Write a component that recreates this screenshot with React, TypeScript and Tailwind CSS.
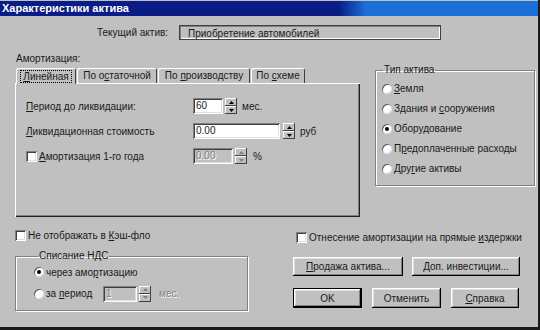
import type { ReactNode } from 'react';

const sunken = 'shadow-[inset_1px_1px_0_#808080,inset_-1px_-1px_0_#ffffff,inset_2px_2px_0_#404040,inset_-2px_-2px_0_#dfdfdf]';
const raised = 'shadow-[inset_-1px_-1px_0_#000000,inset_1px_1px_0_#ffffff,inset_-2px_-2px_0_#808080,inset_2px_2px_0_#dfdfdf]';
const raisedSmall = 'shadow-[inset_-1px_-1px_0_#404040,inset_1px_1px_0_#ffffff]';
const etched = 'border border-[#808080] shadow-[1px_1px_0_#ffffff,inset_1px_1px_0_#ffffff]';
const grey = 'text-[#808080] [text-shadow:1px_1px_0_#ffffff]';

function U({ children }: { children: ReactNode }) {
  return <span className="underline underline-offset-1">{children}</span>;
}

function Spin({ disabled }: { disabled?: boolean }) {
  const fill = disabled ? '#808080' : '#000000';
  return (
    <div className="flex flex-col w-[12px] h-[16px]">
      <div className={`flex-1 flex items-center justify-center bg-[#c0c0c0] ${raisedSmall}`}>
        <svg width="5" height="3" viewBox="0 0 5 3"><polygon points="0,3 2.5,0 5,3" fill={fill} /></svg>
      </div>
      <div className={`flex-1 flex items-center justify-center bg-[#c0c0c0] ${raisedSmall}`}>
        <svg width="5" height="3" viewBox="0 0 5 3"><polygon points="0,0 5,0 2.5,3" fill={fill} /></svg>
      </div>
    </div>
  );
}

function Field({ value, w, disabled }: { value: string; w: string; disabled?: boolean }) {
  return (
    <div className={`${w} h-[16px] pl-[3px] leading-[16px] ${sunken} ${disabled ? `bg-[#c0c0c0] ${grey}` : 'bg-white'}`}>
      {value}
    </div>
  );
}

function Check() {
  return <span className={`w-[11px] h-[11px] shrink-0 bg-white ${sunken}`} />;
}

function Radio({ on }: { on?: boolean }) {
  return (
    <span className="w-[10px] h-[10px] shrink-0 rounded-full bg-white shadow-[inset_1px_1px_0_#606060,inset_-1px_-1px_0_#dfdfdf] flex items-center justify-center">
      {on && <span className="w-[4px] h-[4px] rounded-full bg-black" />}
    </span>
  );
}

function Tab({ children, active, w }: { children: ReactNode; active?: boolean; w: string }) {
  return (
    <div
      className={`${w} h-[15px] flex items-center justify-center bg-[#c0c0c0] rounded-t-[2px] shadow-[inset_1px_1px_0_#ffffff,inset_-1px_0_0_#404040] ${
        active ? 'relative z-10 h-[16px] -mb-px' : ''
      }`}
    >
      {active ? (
        <span className="border border-dotted border-black px-[2px] leading-[11px]">{children}</span>
      ) : (
        <span>{children}</span>
      )}
    </div>
  );
}

function Button({ children, w, def }: { children: ReactNode; w: string; def?: boolean }) {
  return (
    <div className={`${w} h-full flex items-center justify-center bg-[#c0c0c0] ${raised} ${def ? 'border border-black' : ''}`}>
      <span>{children}</span>
    </div>
  );
}

export default function App() {
  return (
    <div className="w-[540px] h-[330px] overflow-hidden bg-[#c0c0c0] text-[#1a1a1a] text-[10px] font-['Liberation_Sans',Arial,sans-serif] border-r-2 border-b-[3px] border-[#1a1a1a]">
      <div className="mt-px h-[15px] flex items-center pl-[2px] text-white font-bold text-[11px] bg-[linear-gradient(90deg,#0a1d86_0%,#0a1d86_63%,#1b6fd8_68%,#1b6fd8_100%)]">
        Характеристики актива
      </div>

      <div className="pl-[15px]">
        <div className="mt-[9px] flex items-center h-[15px]">
          <span className="ml-[82px] w-[82px]">Текущий актив:</span>
          <div className="w-[262px] h-[15px] pl-[8px] leading-[15px] border border-[#404040] shadow-[inset_1px_1px_0_#808080,inset_-1px_-1px_0_#ffffff]">
            Приобретение автомобилей
          </div>
        </div>

        <div className="mt-[13px] flex items-start">
          <div className="w-[345px]">
            <div className="h-[12px] leading-[12px] pl-[1px]">Амортизация:</div>
            <div className="mt-[3px] flex items-end h-[15px] pl-[1px] gap-[1px]">
              <Tab active w="w-[60px]"><U>Л</U>инейная</Tab>
              <Tab w="w-[80px]">По о<U>с</U>таточной</Tab>
              <Tab w="w-[92px]">По <U>п</U>роизводству</Tab>
              <Tab w="w-[54px]">По <U>с</U>хеме</Tab>
            </div>
            <div className="h-[134px] pl-[11px] pt-[15px] flex flex-col gap-[9px] shadow-[inset_1px_1px_0_#ffffff,inset_-1px_-1px_0_#202020,inset_-2px_-2px_0_#808080]">
              <div className="flex items-center h-[16px]">
                <span className="w-[167px]"><U>П</U>ериод до ликвидации:</span>
                <Field value="60" w="w-[30px]" />
                <span className="ml-[2px]"><Spin /></span>
                <span className="ml-[5px]">мес.</span>
              </div>
              <div className="flex items-center h-[16px]">
                <span className="w-[167px]"><U>Л</U>иквидационная стоимость</span>
                <Field value="0.00" w="w-[87px]" />
                <span className="ml-[3px]"><Spin /></span>
                <span className="ml-[5px]">руб</span>
              </div>
              <div className="flex items-center h-[16px]">
                <span className="w-[167px] flex items-center gap-[2px]">
                  <Check />
                  <span><U>А</U>мортизация 1-го года</span>
                </span>
                <Field value="0.00" w="w-[40px]" disabled />
                <span className="ml-[2px]"><Spin disabled /></span>
                <span className="ml-[6px]">%</span>
              </div>
            </div>
          </div>

          <fieldset className={`ml-[15px] mt-[11px] w-[160px] h-[122px] ${etched} pl-[6px]`}>
            <legend className="ml-[1px] px-[1px] h-[12px] leading-[12px]">Тип актива</legend>
            <div className="pt-[6px] flex flex-col gap-[7px]">
              {[
                [<><U>З</U>емля</>, false],
                [<>Здания и <U>с</U>ооружения</>, false],
                [<>Оборудование</>, true],
                [<>П<U>р</U>едоплаченные расходы</>, false],
                [<>Дру<U>г</U>ие активы</>, false],
              ].map(([label, on], i) => (
                <div key={i} className="h-[13px] flex items-center gap-[2px]">
                  <Radio on={on as boolean} />
                  <span>{label as ReactNode}</span>
                </div>
              ))}
            </div>
          </fieldset>
        </div>

        <div className="flex items-start">
          <div className="w-[233px]">
            <div className="mt-[12px] h-[13px] flex items-center gap-[2px]">
              <Check />
              <span>Не отображать в <U>К</U>эш-фло</span>
            </div>
            <fieldset className={`mt-[8px] h-[61px] ${etched} pl-[18px]`}>
              <legend className="ml-[4px] px-[1px] h-[12px] leading-[12px]">Списание НДС</legend>
              <div className="pt-[3px] h-[14px] box-content flex items-center gap-[2px]">
                <Radio on />
                <span>через амо<U>р</U>тизацию</span>
              </div>
              <div className="mt-[6px] h-[17px] flex items-center">
                <Radio />
                <span className="ml-[2px] w-[57px]">за <U>п</U>ериод</span>
                <Field value="1" w="w-[34px]" disabled />
                <span className="ml-[2px]"><Spin disabled /></span>
                <span className={`ml-[8px] ${grey}`}>мес.</span>
              </div>
            </fieldset>
          </div>

          <div className="ml-[45px]">
            <div className="mt-[14px] h-[13px] pl-[3px] flex items-center gap-[2px]">
              <Check />
              <span>Отнесение амортизации на прямые <U>и</U>здержки</span>
            </div>
            <div className="mt-[13px] h-[19px] flex gap-[9px]">
              <Button w="w-[110px]"><U>П</U>родажа актива...</Button>
              <Button w="w-[108px]">Доп. инвестиции...</Button>
            </div>
            <div className="mt-[12px] h-[20px] flex gap-[10px]">
              <Button w="w-[69px]" def>OK</Button>
              <Button w="w-[69px]">Отменить</Button>
              <Button w="w-[68px]"><U>С</U>правка</Button>
            </div>
          </div>
        </div>
      </div>
    </div>
  );
}
